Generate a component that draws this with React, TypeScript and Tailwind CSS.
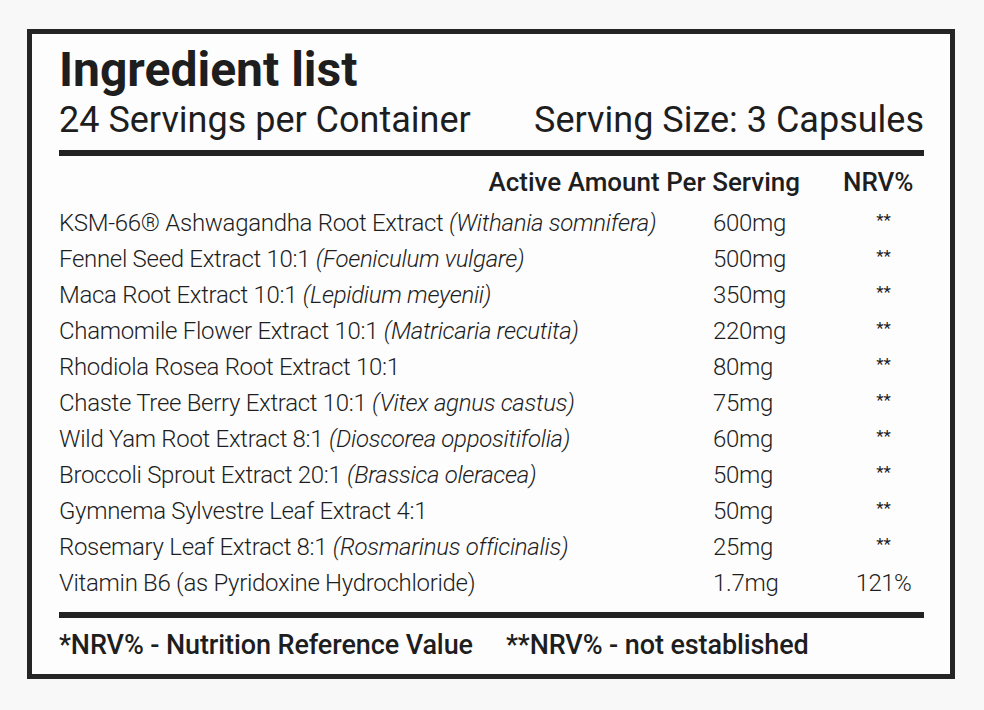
const rows = [
	{ name: "KSM-66® Ashwagandha Root Extract", latin: "Withania somnifera", amount: "600mg", nrv: "**" },
	{ name: "Fennel Seed Extract 10:1", latin: "Foeniculum vulgare", amount: "500mg", nrv: "**" },
	{ name: "Maca Root Extract 10:1", latin: "Lepidium meyenii", amount: "350mg", nrv: "**" },
	{ name: "Chamomile Flower Extract 10:1", latin: "Matricaria recutita", amount: "220mg", nrv: "**" },
	{ name: "Rhodiola Rosea Root Extract 10:1", latin: "", amount: "80mg", nrv: "**" },
	{ name: "Chaste Tree Berry Extract 10:1", latin: "Vitex agnus castus", amount: "75mg", nrv: "**" },
	{ name: "Wild Yam Root Extract 8:1", latin: "Dioscorea oppositifolia", amount: "60mg", nrv: "**" },
	{ name: "Broccoli Sprout Extract 20:1", latin: "Brassica oleracea", amount: "50mg", nrv: "**" },
	{ name: "Gymnema Sylvestre Leaf Extract 4:1", latin: "", amount: "50mg", nrv: "**" },
	{ name: "Rosemary Leaf Extract 8:1", latin: "Rosmarinus officinalis", amount: "25mg", nrv: "**" },
	{ name: "Vitamin B6 (as Pyridoxine Hydrochloride)", latin: "", amount: "1.7mg", nrv: "121%" },
];

const App = () => {
	return (
		<div
			className="min-h-[710px] w-full bg-[#f8f8f8] pt-[29px] pl-[27px] text-[#1e1e1e]"
			style={{ fontFamily: "Roboto, 'Liberation Sans', sans-serif" }}
		>
			<div className="h-[650px] w-[928px] border-[5px] border-[#252525] bg-[#fdfdfd] pl-[27px] pr-[26px] pt-[12px]">
				<h1 className="text-[48px] font-bold leading-[48px]">Ingredient list</h1>

				<div className="mt-[6px] flex justify-between text-[36px] leading-[40px]">
					<span>24 Servings per Container</span>
					<span>Serving Size: 3 Capsules</span>
				</div>

				<div className="mt-[10px] h-[6px] bg-[#222]" />

				<div className="mt-[11px] flex justify-end text-[26px] font-medium leading-[30px]">
					<span>Active Amount Per Serving</span>
					<span className="ml-[43px] w-[81px]">NRV%</span>
				</div>

				<div className="mt-[8px] font-light">
					{rows.map((row) => (
						<div
							key={row.name}
							className="grid grid-cols-[654px_130px_1fr] text-[24px] leading-[36px]"
						>
							<span className="whitespace-nowrap tracking-[-0.3px]">
								{row.name}
								{row.latin && <em> ({row.latin})</em>}
							</span>
							<span className="tracking-[-0.3px]">{row.amount}</span>
							<span
								className={
									row.nrv === "**"
										? "text-center text-[17px] font-normal leading-[30px]"
										: "text-center tracking-[-0.5px]"
								}
							>
								{row.nrv}
							</span>
						</div>
					))}
				</div>

				<div className="mt-[11px] h-[6px] bg-[#222]" />

				<div className="mt-[11px] flex gap-[33px] text-[27px] font-medium leading-[32px] tracking-[-0.1px]">
					<span>*NRV% - Nutrition Reference Value</span>
					<span>**NRV% - not established</span>
				</div>
			</div>
		</div>
	);
};

export default App;
